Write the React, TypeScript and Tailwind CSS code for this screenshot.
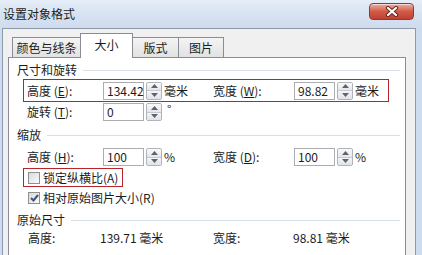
import type { ReactNode } from 'react';

const FONT = "font-['Noto_Sans_CJK_SC','Liberation_Sans',sans-serif]";

function Spinner() {
  return (
    <div className="ml-[2px] flex h-[18px] w-[16px] flex-col overflow-hidden rounded-[2px] border border-[#b1b5ba] bg-[#eceef1]">
      <div className="flex flex-1 items-center justify-center border-b border-[#c5c9ce] bg-linear-to-b from-[#f8f9fa] to-[#e4e7eb]">
        <svg width="7" height="4" viewBox="0 0 7 4">
          <path d="M0 4 L3.5 0 L7 4Z" fill="#5d6370" />
        </svg>
      </div>
      <div className="flex flex-1 items-center justify-center bg-linear-to-b from-[#f4f5f7] to-[#e0e3e7]">
        <svg width="7" height="4" viewBox="0 0 7 4">
          <path d="M0 0 L3.5 4 L7 0Z" fill="#5d6370" />
        </svg>
      </div>
    </div>
  );
}

function NumBox({ value }: { value: string }) {
  return (
    <div className="flex h-[18px] w-[41px] items-center border border-[#abadb3] bg-white pl-[3px] leading-none">
      {value}
    </div>
  );
}

interface FieldProps {
  label: ReactNode;
  value: string;
  unit: ReactNode;
  labelClass: string;
  unitClass?: string;
}

function Field({ label, value, unit, labelClass, unitClass = '' }: FieldProps) {
  return (
    <div className="flex items-center">
      <div className={`${labelClass} leading-[16px]`}>{label}</div>
      <NumBox value={value} />
      <Spinner />
      <div className={`pl-[2px] leading-[16px] ${unitClass}`}>{unit}</div>
    </div>
  );
}

function GroupTitle({ children, className = '' }: { children: ReactNode; className?: string }) {
  return (
    <div className={`flex h-[16px] items-center pl-[8px] pr-[5px] ${className}`}>
      <span className="leading-[16px]">{children}</span>
      <div className="ml-[6px] h-0 flex-1 border-t border-[#d8dfe6]" />
    </div>
  );
}

function CheckBox({ checked = false }: { checked?: boolean }) {
  return (
    <div className="flex h-[12px] w-[12px] items-center justify-center border border-[#8e8f8f] bg-linear-to-br from-[#d9dadb] to-[#fbfbfb]">
      {checked && (
        <svg width="9" height="8" viewBox="0 0 9 8">
          <path d="M1 4 L3.5 6.5 L8 1" fill="none" stroke="#3f5478" strokeWidth="2" />
        </svg>
      )}
    </div>
  );
}

function Tab({ children, selected = false, className = '' }: { children: ReactNode; selected?: boolean; className?: string }) {
  if (selected) {
    return (
      <div className={`relative z-10 -mb-px flex h-[25px] items-center justify-center border border-b-0 border-[#898c95] bg-white pb-[3px] leading-[16px] ${className}`}>
        {children}
      </div>
    );
  }
  return (
    <div className={`flex h-[20px] items-center justify-center border border-b-0 border-[#898c95] bg-linear-to-b from-[#f4f4f4] to-[#e2e2e2] leading-[16px] ${className}`}>
      {children}
    </div>
  );
}

export default function App() {
  return (
    <div className={`h-[255px] w-[422px] overflow-hidden bg-[#cddcee] text-[12px] text-[#1c1c1c] ${FONT}`}>
      <div className="flex h-[28px] items-start justify-between bg-linear-to-b from-[#e6eef8] via-[#d7e3f2] to-[#cfdcee] pl-[3px] pr-[8px]">
        <span className="mt-[6px] leading-[16px]">设置对象格式</span>
        <div className="mt-[3px] flex h-[17px] w-[45px] items-center justify-center rounded-[4px] border border-[#8a3c33] bg-linear-to-b from-[#eab0a3] via-[#d25a48] to-[#c0402f] shadow-[inset_0_1px_0_rgba(255,255,255,0.55)]">
          <svg width="14" height="11" viewBox="0 0 14 11">
            <path d="M3 2 L11 9 M11 2 L3 9" stroke="#6b251d" strokeWidth="4.2" strokeLinecap="round" />
            <path d="M3 2 L11 9 M11 2 L3 9" stroke="#ffffff" strokeWidth="2.2" strokeLinecap="round" />
          </svg>
        </div>
      </div>

      <div className="ml-[2px] flex h-[230px] w-[414px] flex-col border border-[#8d9aab] bg-[#f0f0f0] pl-[5px] pr-[9px] pt-[4px]">
        <div className="flex h-[24px] items-end pl-[4px]">
          <Tab className="w-[69px]">颜色与线条</Tab>
          <Tab selected className="-ml-px w-[53px]">大小</Tab>
          <Tab className="-ml-px w-[47px]">版式</Tab>
          <Tab className="-ml-px w-[46px]">图片</Tab>
        </div>

        <div className="flex-1 border border-[#898c95] bg-white">
          <GroupTitle className="mt-[4px]">尺寸和旋转</GroupTitle>

          <div className="ml-[14px] mt-[1px] flex h-[23px] w-[366px] items-center border border-[#b8242c] pl-[3px]">
            <Field label={<>高度 (<u>E</u>):</>} value="134.42" unit="毫米" labelClass="w-[76px]" unitClass="w-[51px]" />
            <Field label={<>宽度 (<u>W</u>):</>} value="98.82" unit="毫米" labelClass="w-[81px]" />
          </div>

          <div className="flex h-[20px] items-center pl-[18px]">
            <Field label={<>旋转 (<u>T</u>):</>} value="0" unit={<span className="relative -top-[3px]">°</span>} labelClass="w-[76px]" unitClass="pl-[5px]" />
          </div>

          <GroupTitle className="mt-[5px]">缩放</GroupTitle>

          <div className="mt-[4px] flex h-[20px] items-center pl-[18px]">
            <Field label={<>高度 (<u>H</u>):</>} value="100" unit="%" labelClass="w-[76px]" unitClass="w-[51px]" />
            <Field label={<>宽度 (<u>D</u>):</>} value="100" unit="%" labelClass="w-[81px]" />
          </div>

          <div className="ml-[14px] mt-[1px] flex h-[19px] w-[100px] items-center border border-[#b8242c] pl-[4px]">
            <CheckBox />
            <span className="ml-[3px] leading-[16px]">锁定纵横比(A)</span>
          </div>

          <div className="mt-[3px] flex h-[16px] items-center pl-[19px]">
            <CheckBox checked />
            <span className="ml-[3px] leading-[16px]">相对原始图片大小(R)</span>
          </div>

          <GroupTitle className="mt-[6px]">原始尺寸</GroupTitle>

          <div className="mt-[2px] flex h-[16px] items-center pl-[19px] leading-[16px]">
            <span className="w-[72px]">高度:</span>
            <span className="w-[113px]">139.71 毫米</span>
            <span className="w-[80px]">宽度:</span>
            <span>98.81 毫米</span>
          </div>
        </div>
      </div>
    </div>
  );
}
